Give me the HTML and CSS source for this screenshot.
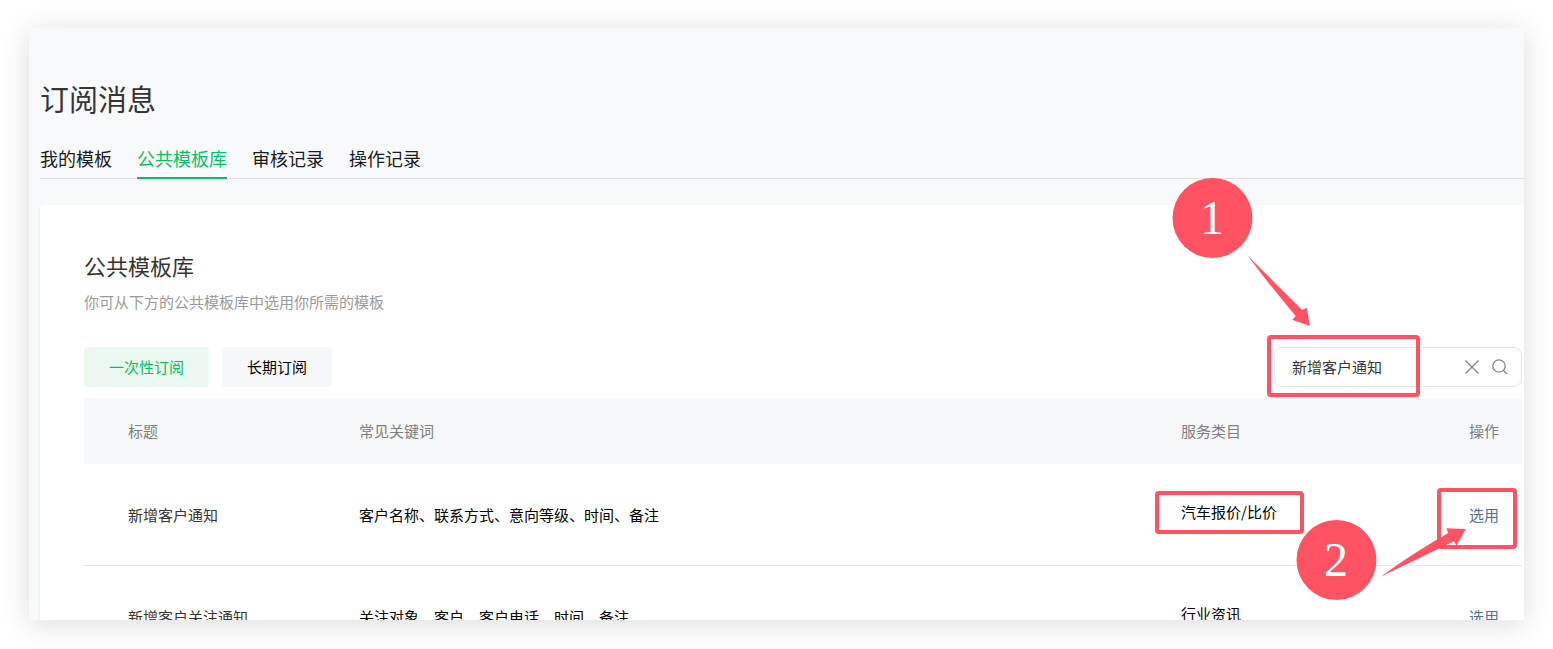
FILE: index.html
```html
<!DOCTYPE html>
<html lang="zh-CN">
<head>
  <meta charset="UTF-8">
  <title>订阅消息</title>
  <link rel="stylesheet" href="styles.css">
</head>
<body>
  <main class="screen">
    <h1 class="page-title">订阅消息</h1>

    <nav class="tabs">
      <a class="tab" href="#mine">我的模板</a>
      <a class="tab active" href="#public">公共模板库</a>
      <a class="tab" href="#audit">审核记录</a>
      <a class="tab" href="#operation">操作记录</a>
    </nav>

    <section class="panel">
      <h2 class="panel-title">公共模板库</h2>
      <p class="panel-desc">你可从下方的公共模板库中选用你所需的模板</p>

      <div class="toolbar">
        <button class="type-btn active" type="button">一次性订阅</button>
        <button class="type-btn" type="button">长期订阅</button>
        <form class="search">
          <input class="search-input" type="text" aria-label="搜索模板" value="新增客户通知">
          <button class="icon-btn" type="reset" aria-label="清空">
            <svg width="16" height="16" viewBox="0 0 16 16"><path d="M1.5 1.5l13 13M14.5 1.5l-13 13"/></svg>
          </button>
          <button class="icon-btn" type="submit" aria-label="搜索">
            <svg width="16" height="16" viewBox="0 0 16 16"><circle cx="7" cy="7" r="6.2"/><path d="M11.3 11.3l4 3.8"/></svg>
          </button>
        </form>
      </div>

      <table class="templates">
        <thead>
          <tr>
            <th class="col-title">标题</th>
            <th>常见关键词</th>
            <th class="col-category">服务类目</th>
            <th class="col-action">操作</th>
          </tr>
        </thead>
        <tbody>
          <tr>
            <td class="col-title">新增客户通知</td>
            <td>客户名称、联系方式、意向等级、时间、备注</td>
            <td class="col-category">汽车报价/比价</td>
            <td class="col-action"><a href="#use">选用</a></td>
          </tr>
          <tr>
            <td class="col-title">新增客户关注通知</td>
            <td>关注对象、客户、客户电话、时间、备注</td>
            <td class="col-category">行业资讯</td>
            <td class="col-action"><a href="#use">选用</a></td>
          </tr>
        </tbody>
      </table>
    </section>

    <!-- step marks over the page -->
    <svg class="marks" width="380" height="592" viewBox="1144 28 380 592">
      <rect class="mark-box" x="1269" y="337" width="149" height="58" rx="2"/>
      <rect class="mark-box" x="1157" y="493" width="145" height="39" rx="2"/>
      <rect class="mark-box" x="1439" y="490" width="76" height="57" rx="2"/>
      <path d="M1247.5 255.5L1302.3 310L1306.7 307.7L1310 326L1292.3 319.7L1295.7 316Q1272 288 1247.5 255.5z"/>
      <path d="M1380.7 576.7Q1413 553 1448.3 533L1446.3 528.3L1466 529L1456.3 545.7L1454 541.3z"/>
      <circle cx="1212.5" cy="218" r="40"/>
      <circle cx="1336.5" cy="560" r="40"/>
      <text x="1212" y="234">1</text>
      <text x="1336" y="576">2</text>
    </svg>
  </main>
</body>
</html>
```
FILE: styles.css
```css
* {
  box-sizing: border-box;
}

body {
  margin: 0;
  height: 100vh;
  padding: 28px 29px 29px;
  display: flex;
  background: #fff;
  color: #000;
  font-family: "Noto Sans CJK SC", sans-serif;
  font-size: 15px;
  line-height: 24px;
}

a {
  text-decoration: none;
}

h1, h2, p {
  margin: 0;
  font-weight: inherit;
}

.screen {
  position: relative;
  flex: 1;
  min-width: 0;
  padding: 48px 0 0 11px;
  overflow: hidden;
  background: #f8f9fb;
  box-shadow: 0 4px 28px rgba(0, 0, 0, 0.14);
}

.page-title {
  color: #353535;
  font-size: 29px;
  line-height: 44px;
}

.tabs {
  display: flex;
  gap: 25px;
  margin-top: 20px;
  border-bottom: 1px solid #dfe0e2;
}

.tab {
  height: 39px;
  margin-bottom: -1px;
  color: #1a1b1c;
  font-size: 18px;
  line-height: 36px;
}

.tab.active {
  color: #07c160;
  border-bottom: 2px solid #07c160;
}

.panel {
  min-height: 100%;
  margin-top: 26px;
  padding: 46px 2px 0 44px;
  background: #fff;
  border-radius: 4px 0 0 0;
  box-shadow: 0 1px 2px rgba(0, 0, 0, 0.12);
}

.panel-title {
  color: #353535;
  font-size: 22px;
  line-height: 28px;
}

.panel-desc {
  margin-top: 11px;
  color: #9a9a9a;
}

.toolbar {
  display: flex;
  gap: 13px;
  margin: 33px 0 11px;
}

.type-btn {
  height: 40px;
  padding: 0 25px 1px;
  border: 0;
  border-radius: 4px;
  background: #f6f7f9;
  color: #000;
  font: inherit;
}

.type-btn.active {
  background: #eaf8f0;
  color: #07c160;
}

.search {
  display: flex;
  align-items: center;
  gap: 12px;
  width: 248px;
  height: 40px;
  margin-left: auto;
  padding: 0 13px 0 17px;
  border: 1px solid #e4e5e7;
  border-radius: 8px;
}

.search-input {
  flex: 1;
  min-width: 0;
  padding: 0;
  border: 0;
  outline: 0;
  background: none;
  color: #353535;
  font: inherit;
}

.icon-btn {
  display: flex;
  padding: 0;
  border: 0;
  background: none;
}

.icon-btn svg {
  fill: none;
  stroke: #858585;
  stroke-width: 1.3;
}

.templates {
  width: 100%;
  table-layout: fixed;
  border-spacing: 0;
  text-align: left;
}

.templates th {
  height: 66px;
  padding: 0;
  background: #f6f8fa;
  color: #7f7f7f;
  font-weight: inherit;
}

.templates td {
  height: 102px;
  padding: 0;
  border-bottom: 1px solid #e7e7e9;
}

.templates .col-title {
  width: 275px;
  padding-left: 44px;
}

td.col-title {
  color: #353535;
}

.templates .col-category {
  width: 288px;
}

.templates td.col-category {
  padding-bottom: 6px;
}

.col-action {
  width: 53px;
}

.col-action a {
  color: #576b95;
}

.marks {
  position: absolute;
  top: 0;
  right: 0;
  fill: #ff5263;
  pointer-events: none;
}

.mark-box {
  fill: none;
  stroke: #ff5263;
  stroke-width: 4;
}

.marks text {
  fill: #fff;
  font-family: "Liberation Serif", serif;
  font-size: 48px;
  text-anchor: middle;
}
```
